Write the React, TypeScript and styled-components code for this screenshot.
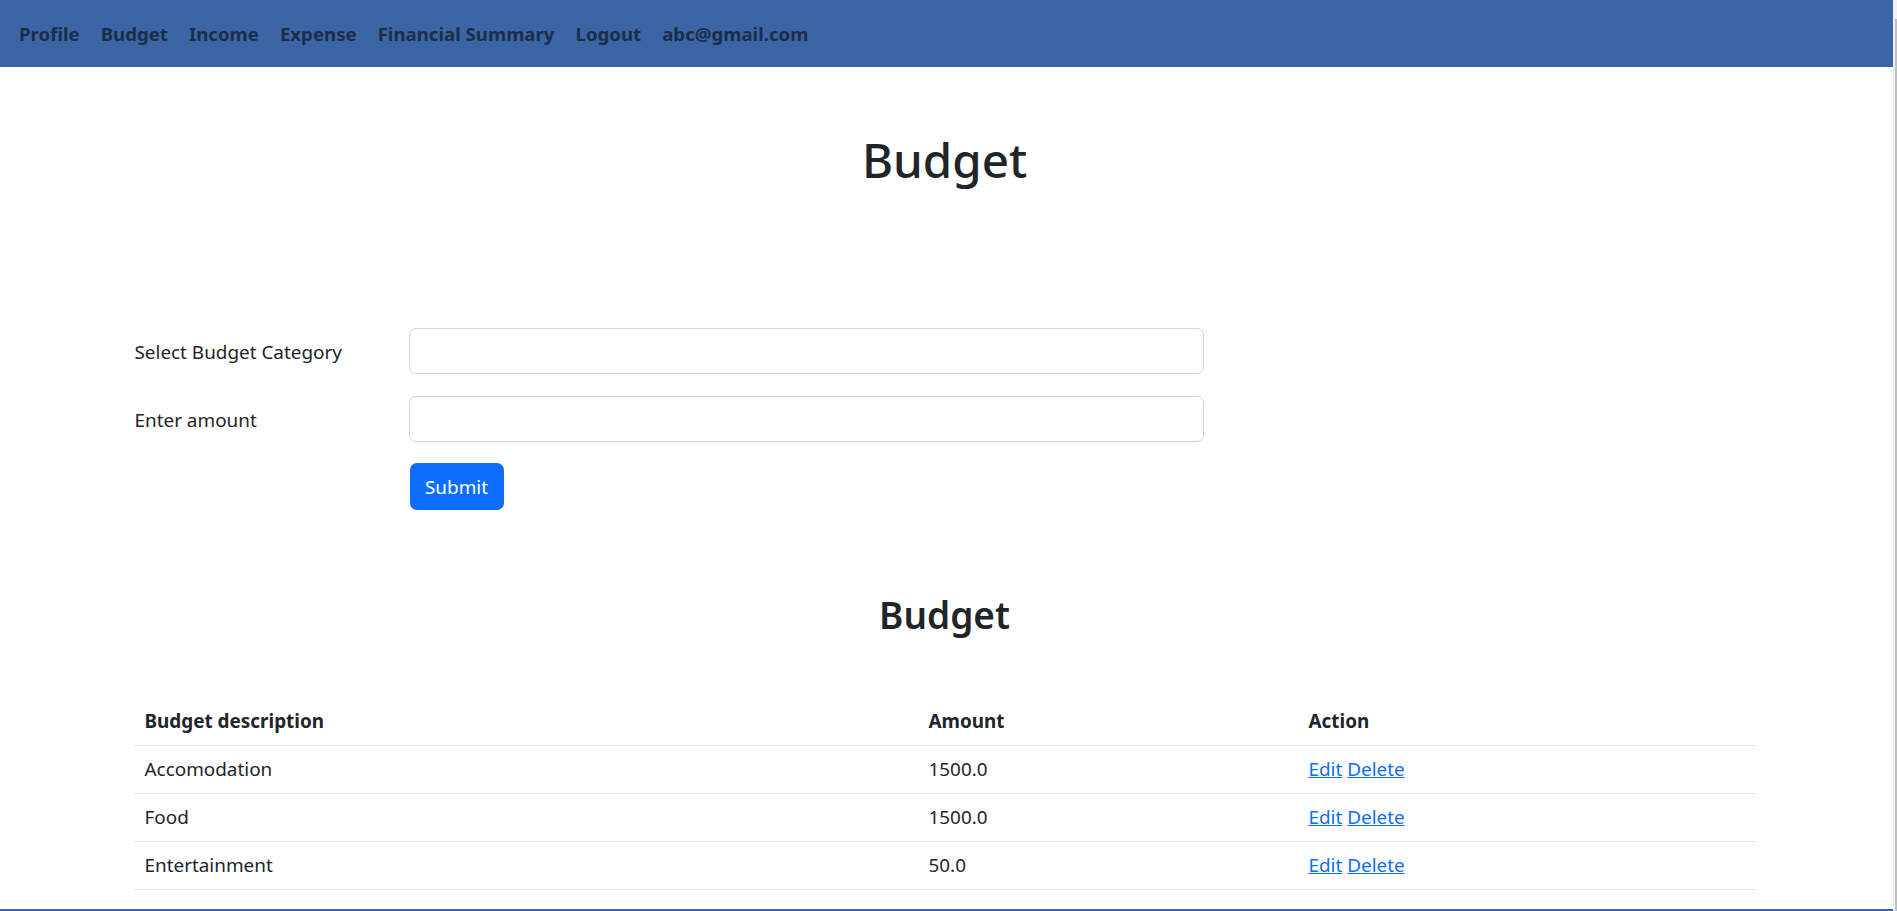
import React from "react";
import styled, { createGlobalStyle } from "styled-components";

const FONT = `"Noto Sans", "Open Sans", "DejaVu Sans", sans-serif`;

const GlobalStyle = createGlobalStyle`
  html, body {
    margin: 0;
    padding: 0;
    overflow: hidden;
    background: #ffffff;
  }
  body {
    font-family: ${FONT};
    color: #212529;
  }
  * { box-sizing: border-box; }
`;

const Page = styled.div`
  width: 1893px;
  min-height: 1000px;
  display: flex;
  flex-direction: column;
`;

const Navbar = styled.nav`
  height: 67px;
  background: #3b65a4;
  display: flex;
  align-items: center;
  gap: 21px;
  padding-left: 19px;
`;

const NavLink = styled.a`
  font-family: ${FONT};
  font-weight: 700;
  font-size: 18.65px;
  color: #1c2d4a;
  text-decoration: none;
  cursor: pointer;
`;

const Main = styled.main`
  width: 1622px;
  margin: 0 auto;
  position: relative;
  left: -2px;
  display: flex;
  flex-direction: column;
`;

const Title = styled.h1`
  margin: 63px 0 0;
  font-size: 47.5px;
  line-height: 60px;
  font-weight: 500;
  text-align: center;
  color: #212529;
`;

const Form = styled.form`
  margin-top: 138px;
  display: grid;
  grid-template-columns: 275px 795px;
  row-gap: 22px;
  align-items: center;
`;

const Label = styled.label`
  font-size: 18.9px;
  color: #212529;
  padding-top: 2px;
  padding-left: 1px;
`;

const Input = styled.input`
  height: 46px;
  width: 100%;
  border: 1px solid #ced4da;
  border-radius: 7px;
  background: #fff;
  font-family: ${FONT};
  font-size: 18.9px;
  padding: 0 15px;
  outline: none;
`;

const SubmitButton = styled.button`
  grid-column: 2;
  justify-self: start;
  margin-left: 1px;
  margin-top: -1px;
  width: 94px;
  height: 47px;
  border: none;
  border-radius: 7px;
  background: #0d6efd;
  color: #fff;
  font-family: ${FONT};
  font-size: 18.9px;
  cursor: pointer;
`;

const SubTitle = styled.h2`
  margin: 81px 0 0;
  font-size: 37px;
  line-height: 48px;
  font-weight: 600;
  text-align: center;
  color: #212529;
`;

const Table = styled.table`
  margin-top: 59px;
  width: 100%;
  border-collapse: collapse;
  table-layout: fixed;
`;

const HeadCell = styled.th<{ $w: number }>`
  width: ${(p) => p.$w}px;
  text-align: left;
  font-weight: 700;
  font-size: 18.9px;
  line-height: 27px;
  padding: 10px 10px 10px 11px;
  border-bottom: 1px solid #dee2e6;
  color: #212529;
`;

const Cell = styled.td`
  font-size: 18.9px;
  line-height: 27px;
  padding: 10px 10px 10px 11px;
  border-bottom: 1px solid #dee2e6;
  color: #212529;
`;

const ActionLink = styled.a`
  color: #0d6efd;
  text-decoration: underline;
  cursor: pointer;
`;

const Footer = styled.footer`
  margin-top: 19px;
  height: 80px;
  background: #3b65a4;
`;

const ScrollTrack = styled.div`
  position: fixed;
  top: 0;
  right: 0;
  width: 4px;
  height: 100%;
  background: #f1f1f1;
`;

const ScrollThumb = styled.div`
  position: absolute;
  top: 19px;
  right: 0;
  width: 2px;
  bottom: 0;
  background: #c1c1c1;
`;

const rows = [
  { name: "Accomodation", amount: "1500.0" },
  { name: "Food", amount: "1500.0" },
  { name: "Entertainment", amount: "50.0" },
];

export default function App() {
  return (
    <>
      <GlobalStyle />
      <Page>
        <Navbar>
          {["Profile", "Budget", "Income", "Expense", "Financial Summary", "Logout", "abc@gmail.com"].map((t) => (
            <NavLink key={t}>{t}</NavLink>
          ))}
        </Navbar>
        <Main>
          <Title>Budget</Title>
          <Form onSubmit={(e) => e.preventDefault()}>
            <Label htmlFor="cat">Select Budget Category</Label>
            <Input id="cat" />
            <Label htmlFor="amt">Enter amount</Label>
            <Input id="amt" />
            <SubmitButton type="submit">Submit</SubmitButton>
          </Form>
          <SubTitle>Budget</SubTitle>
          <Table>
            <thead>
              <tr>
                <HeadCell $w={784}>Budget description</HeadCell>
                <HeadCell $w={380}>Amount</HeadCell>
                <HeadCell $w={458}>Action</HeadCell>
              </tr>
            </thead>
            <tbody>
              {rows.map((r) => (
                <tr key={r.name}>
                  <Cell>{r.name}</Cell>
                  <Cell>{r.amount}</Cell>
                  <Cell>
                    <ActionLink>Edit</ActionLink> <ActionLink>Delete</ActionLink>
                  </Cell>
                </tr>
              ))}
            </tbody>
          </Table>
        </Main>
        <Footer />
      </Page>
      <ScrollTrack>
        <ScrollThumb />
      </ScrollTrack>
    </>
  );
}
